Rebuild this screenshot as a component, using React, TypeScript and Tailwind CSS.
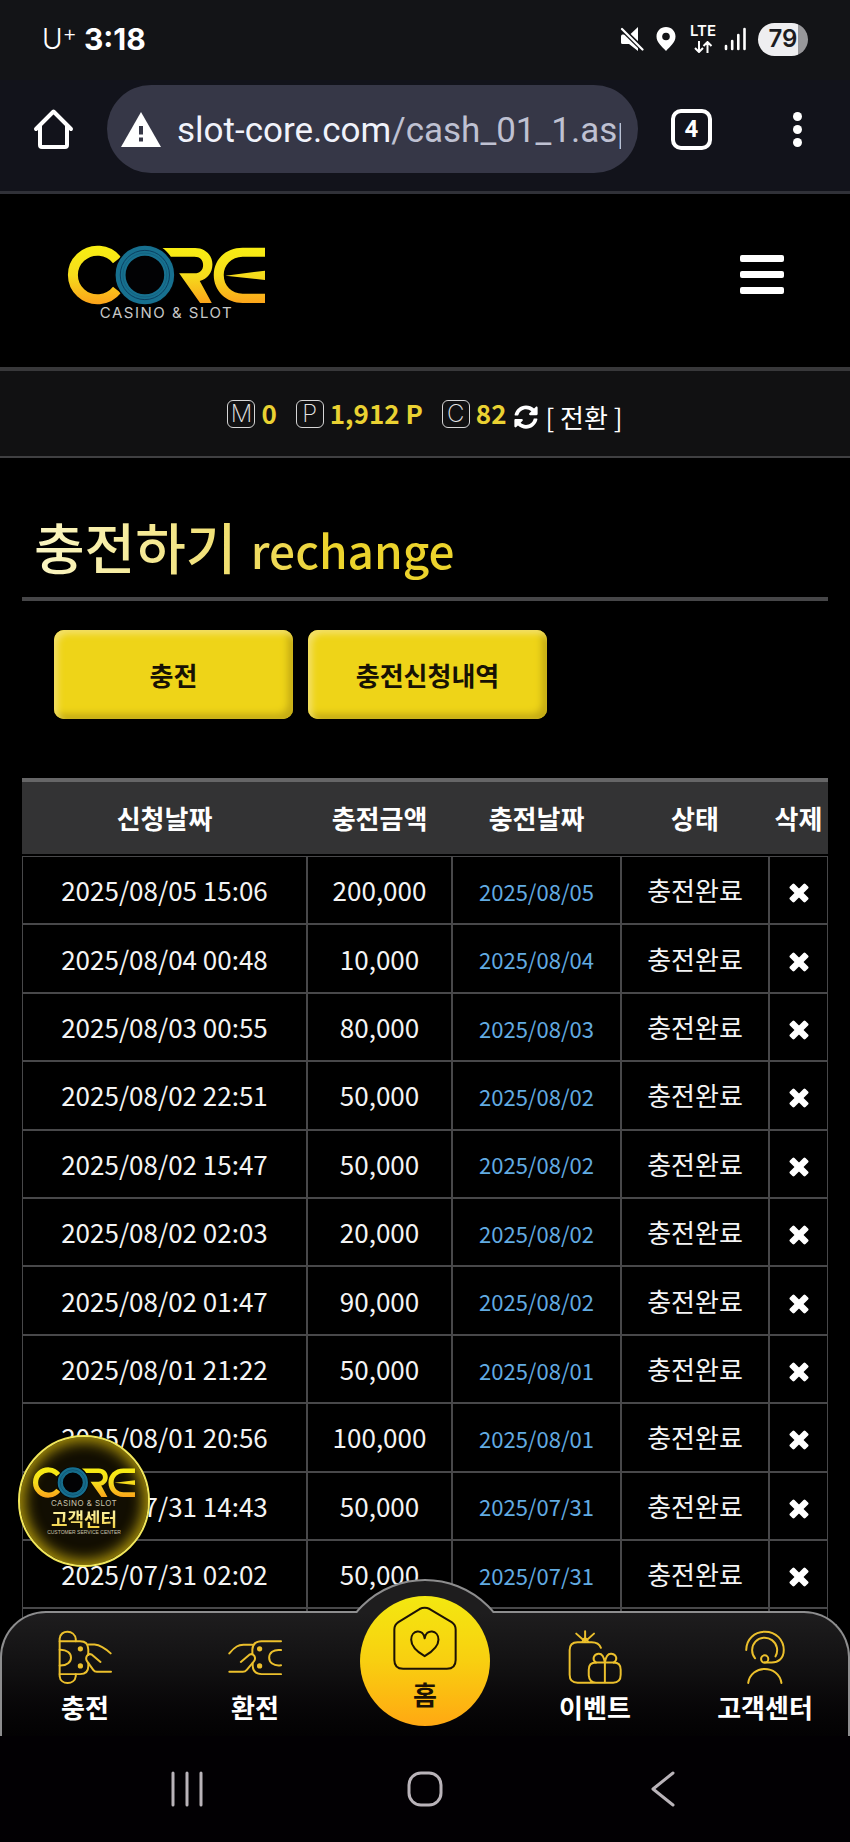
import React from "react";
import { FaSyncAlt } from "react-icons/fa";

type Row = { requested: string; amount: string; charged: string };

const rows: Row[] = [
  { requested: "2025/08/05 15:06", amount: "200,000", charged: "2025/08/05" },
  { requested: "2025/08/04 00:48", amount: "10,000", charged: "2025/08/04" },
  { requested: "2025/08/03 00:55", amount: "80,000", charged: "2025/08/03" },
  { requested: "2025/08/02 22:51", amount: "50,000", charged: "2025/08/02" },
  { requested: "2025/08/02 15:47", amount: "50,000", charged: "2025/08/02" },
  { requested: "2025/08/02 02:03", amount: "20,000", charged: "2025/08/02" },
  { requested: "2025/08/02 01:47", amount: "90,000", charged: "2025/08/02" },
  { requested: "2025/08/01 21:22", amount: "50,000", charged: "2025/08/01" },
  { requested: "2025/08/01 20:56", amount: "100,000", charged: "2025/08/01" },
  { requested: "2025/07/31 14:43", amount: "50,000", charged: "2025/07/31" },
  { requested: "2025/07/31 02:02", amount: "50,000", charged: "2025/07/31" },
];

function CoreMark({ id, className }: { id: string; className: string }) {
  const fill = `url(#${id})`;
  return (
    <svg viewBox="200 168 598 180" className={className} aria-hidden="true">
      <defs>
        <linearGradient id={id} gradientUnits="userSpaceOnUse" x1="0" y1="172" x2="0" y2="345">
          <stop offset="0" stopColor="#f8ee12" />
          <stop offset="0.5" stopColor="#f5dc1c" />
          <stop offset="1" stopColor="#fca31a" />
        </linearGradient>
      </defs>
      <path d="M350 213A74 73 0 1 0 350 303" fill="none" stroke={fill} strokeWidth="30" />
      <circle cx="434" cy="258" r="92" fill="#020204" />
      <circle cx="434" cy="258" r="73" fill="none" stroke="#17708f" strokeWidth="30" />
      <circle cx="434" cy="258" r="74" fill="none" stroke="#0a3f60" strokeWidth="3" />
      <circle cx="434" cy="258" r="66" fill="none" stroke="#125a78" strokeWidth="2" />
      <path
        d="M487 177H585C617 177 637 200 637 226C637 252 622 270 599 276L635 342H600L537 253H583C600 253 609 243 609 228C609 213 600 203 583 203H512C505 193 497 184 487 177Z"
        fill={fill}
      />
      <path
        d="M795 176H728C676 176 641 212 641 258C641 306 678 342 728 342H795V314H728C694 314 671 290 671 258C671 228 694 203 728 203H795Z"
        fill={fill}
      />
      <path d="M676 260L795 245V273Z" fill={fill} />
    </svg>
  );
}

function StatusBar() {
  return (
    <div className="flex h-20 items-center justify-between bg-[#131417] pb-[2px] pr-[42px] pl-[42px] text-white">
      <div className="flex items-center gap-[7px]">
        <span className="flex items-start font-[Inter] text-[28px] leading-8 font-light">
          U<span className="text-[22px] leading-5">+</span>
        </span>
        <span className="font-[Inter] text-[30px] leading-8 font-bold">3:18</span>
      </div>
      <div className="flex items-center">
        <svg viewBox="0 0 24 24" className="mr-3 size-6" fill="#fff" aria-hidden="true">
          <path d="M18 0v16.500L9.500 8ZM5 7.500h1L18 19.500V24L9 17H2.500Q1 17 1 15.500V9.500Q1 7.500 2.500 7.500Z" />
          <path d="M2 2L23 22.500" stroke="#131417" strokeWidth="5" />
          <path d="M2 2L22.500 22.500" stroke="#fff" strokeWidth="2.200" strokeLinecap="round" />
        </svg>
        <svg viewBox="0 0 20 24" className="mr-[14px] h-6 w-5" aria-hidden="true">
          <path d="M10 0C4.500 0 .500 4.200 .500 9.500C.500 15.500 6 19.500 10 24C14 19.500 19.500 15.500 19.500 9.500C19.500 4.200 15.500 0 10 0Z" fill="#fff" />
          <circle cx="10" cy="9.500" r="3.800" fill="#131417" />
        </svg>
        <div className="mr-2 flex flex-col items-center">
          <span className="font-[Inter] text-[15px] leading-3 font-semibold">LTE</span>
          <svg viewBox="0 0 18 12" className="mt-1 h-3 w-5" fill="none" stroke="#fff" strokeWidth="2" aria-hidden="true">
            <path d="M5 0V11M1 7L5 11L9 7M13.500 12V1M9.500 5L13.500 1L17.500 5" />
          </svg>
        </div>
        <svg viewBox="0 0 22 24" className="mr-3 h-6 w-[22px]" stroke="#fff" strokeWidth="2.600" strokeLinecap="round" aria-hidden="true">
          <path d="M2 22V19M8.200 22V14M14.300 22V8M20.500 22V2" />
        </svg>
        <span className="flex h-[33px] w-[50px] items-center justify-center rounded-full bg-linear-to-r from-[#eeeef0] from-79% to-[#97979a] to-79% font-[Inter] text-[24px] leading-8 font-semibold text-[#1b1c20]">
          79
        </span>
      </div>
    </div>
  );
}

function BrowserBar() {
  return (
    <div className="flex h-[114px] items-center border-b-[3px] border-[#303138] bg-[#12131b] pr-11 pb-[13px] pl-[33px]">
      <button type="button" aria-label="Home page" className="shrink-0">
        <svg viewBox="0 0 41 42" className="h-[42px] w-[41px]" fill="none" stroke="#fff" strokeWidth="4" strokeLinejoin="round" strokeLinecap="round" aria-hidden="true">
          <path d="M3 21L20.500 3.500L38 21M7 18V37Q7 39 9 39H32Q34 39 34 37V18" />
        </svg>
      </button>
      <div className="ml-[33px] flex h-[88px] min-w-0 flex-1 items-center rounded-full bg-[#363747] pr-[17px] pl-[14px]">
        <svg viewBox="0 0 40 35" className="h-[35px] w-10 shrink-0" aria-hidden="true">
          <path d="M20 0L40 35H0Z" fill="#fff" />
          <path d="M20 14V22.500M20 25.500V29.500" stroke="#363747" strokeWidth="4" />
        </svg>
        <a
          href="#address"
          className="ml-4 min-w-0 flex-1 overflow-hidden pt-1 font-[Roboto] text-[35px] leading-[52px] whitespace-nowrap text-[#f1f3fb]"
        >
          slot-core.com<span className="text-[#bfc1d2]">/cash_01_1.asp</span>
        </a>
      </div>
      <button
        type="button"
        aria-label="4 open tabs"
        className="ml-[33px] flex size-[41px] shrink-0 items-center justify-center rounded-[10px] border-4 border-white font-[Roboto] text-[24px] leading-8 font-bold text-white"
      >
        4
      </button>
      <button type="button" aria-label="Browser menu" className="ml-[77px] flex w-[17px] shrink-0 flex-col items-center gap-1">
        <span className="size-[9px] rounded-full bg-white" />
        <span className="size-[9px] rounded-full bg-white" />
        <span className="size-[9px] rounded-full bg-white" />
      </button>
    </div>
  );
}

function PointItem({ letter, value }: { letter: string; value: string }) {
  return (
    <span className="flex items-center gap-[6px]">
      <span className="flex size-7 items-center justify-center rounded-md border border-[#d6d6d6] font-[Inter] text-[24px] leading-6 font-extralight text-[#e4e4e4]">
        {letter}
      </span>
      <span className="pb-[2px] text-[26px] leading-8 font-bold text-[#ead232]">{value}</span>
    </span>
  );
}

function DeleteIcon() {
  return (
    <svg viewBox="0 0 20 20" className="block size-5" fill="#fff" aria-hidden="true">
      <rect x="-1" y="6.800" width="22" height="6.400" rx="1.400" transform="rotate(45 10 10)" />
      <rect x="-1" y="6.800" width="22" height="6.400" rx="1.400" transform="rotate(-45 10 10)" />
    </svg>
  );
}

const cell = "h-[68px] border border-[#48484a] p-0 text-center align-middle";

function HistoryTable() {
  return (
    <table className="mt-[59px] h-[899px] w-full table-fixed border-separate border-spacing-0 text-[26px] leading-8 text-[#f4f4f4]">
      <colgroup>
        <col className="w-[285px]" />
        <col className="w-[145px]" />
        <col className="w-[169px]" />
        <col className="w-[148px]" />
        <col className="w-[59px]" />
      </colgroup>
      <thead>
        <tr>
          {["신청날짜", "충전금액", "충전날짜", "상태", "삭제"].map((h) => (
            <th
              key={h}
              scope="col"
              className="h-[78px] border-t-4 border-b-2 border-t-[#666667] border-b-black bg-[#333334] p-0 text-center font-bold whitespace-nowrap text-white"
            >
              {h}
            </th>
          ))}
        </tr>
      </thead>
      <tbody>
        {rows.map((r) => (
          <tr key={r.requested}>
            <td className={cell}>{r.requested}</td>
            <td className={cell}>{r.amount}</td>
            <td className={cell}>
              <span className="text-[22px] text-[#62abe2]">{r.charged}</span>
            </td>
            <td className={cell}>충전완료</td>
            <td className={cell}>
              <button type="button" aria-label="삭제" className="mx-auto block pt-[6px]">
                <DeleteIcon />
              </button>
            </td>
          </tr>
        ))}
        <tr aria-hidden="true">
          <td className={cell} />
          <td className={cell} />
          <td className={cell} />
          <td className={cell} />
          <td className={cell} />
        </tr>
      </tbody>
    </table>
  );
}

function NavItem({ label, children }: { label: string; children: React.ReactNode }) {
  return (
    <a href="#menu" className="flex flex-1 flex-col items-center gap-[7px] pt-[17px] text-[26px] leading-8 font-bold text-white">
      {children}
      <span>{label}</span>
    </a>
  );
}

const iconClass = "size-[54px] fill-none stroke-[#ecc02c] [stroke-linecap:round] [stroke-linejoin:round] [stroke-width:6px]";

function BottomNav() {
  return (
    <nav className="absolute inset-x-0 bottom-0">
      <div className="absolute inset-x-0 -top-8 z-10 flex h-[34px] justify-center overflow-hidden">
        <span className="size-[180px] shrink-0 rounded-full border-2 border-[#8d8d8e] bg-[#1e1d1e]" />
      </div>
      <div className="h-[125px] rounded-t-[46px] border-x-2 border-t-2 border-[#8d8d8e] bg-linear-to-b from-[#1e1d1e] via-[#100f10] to-[#030203]">
        <div className="-mx-0.5 flex h-full">
          <NavItem label="충전">
            <svg viewBox="173 656 164 164" className={iconClass} aria-hidden="true">
              <path d="M178 690V790M178 690V682C180 654 224 654 227 684V690M178 790V796C180 824 224 824 227 796V790" />
              <path d="M178 690H240Q265 690 265 715V732M265 756V766Q265 790 240 790H178M178 716C224 714 224 766 178 764" />
              <path d="M265 700H284C304 702 320 715 333 727M302 753L276 731C262 724 254 742 262 752L280 777Q284 783 291 783H334" />
              <circle cx="241" cy="713" r="5" className="fill-[#ecc02c]" />
              <circle cx="241" cy="765" r="5" className="fill-[#ecc02c]" />
            </svg>
          </NavItem>
          <NavItem label="환전">
            <svg viewBox="683 656 164 164" className={iconClass} aria-hidden="true">
              <path d="M844 690H785Q759 690 757 715V730M758 756V766Q760 790 785 790H844M844 717C796 710 796 770 844 763" />
              <path d="M687 727C705 705 715 702 730 701H757M722 753L748 731C762 724 770 742 761 752L740 777Q735 783 728 783H687" />
              <circle cx="779" cy="713" r="5" className="fill-[#ecc02c]" />
              <circle cx="779" cy="765" r="5" className="fill-[#ecc02c]" />
            </svg>
          </NavItem>
          <div className="relative z-20 flex flex-1 justify-center">
            <a
              href="#home"
              className="-mt-[17px] flex size-[130px] shrink-0 flex-col items-center gap-2 rounded-full bg-linear-to-b from-[#f3e810] via-[#f8cf10] to-[#ffa812] pt-[10px] text-[26px] leading-8 font-bold text-[#1c1205]"
            >
              <svg viewBox="581 140 190 190" className="size-16 shrink-0 fill-none stroke-[#1c1205] [stroke-linejoin:round] [stroke-width:6px]" aria-hidden="true">
                <path d="M660 149Q675 142 690 149L755 188Q767 196 767 210V300Q767 326 741 326H611Q585 326 585 300V210Q585 196 597 188Z" />
                <path d="M675 289C650 274 635 257 635 240C635 210 671 206 675 236C679 206 716 210 716 240C716 257 700 274 675 289Z" />
              </svg>
              <span>홈</span>
            </a>
          </div>
          <NavItem label="이벤트">
            <svg viewBox="143 207 164 164" className={iconClass} aria-hidden="true">
              <path d="M243 261C238 248 228 244 215 244H172Q148 244 148 268V343Q148 367 172 367H280Q303 367 303 343V328Q303 306 282 306H228Q206 306 206 328V345Q208 367 228 367" />
              <path d="M255 306C252 286 243 278 235 279C219 282 216 298 228 306M255 306C258 286 267 278 275 279C292 282 294 298 282 306M255 306V366" />
              <path d="M195 242V211M195 242L168 218M195 242L222 218M187 242L195 230L204 242" />
            </svg>
          </NavItem>
          <NavItem label="고객센터">
            <svg viewBox="654 207 164 164" className={iconClass} aria-hidden="true">
              <path d="M679 268C679 234 705 212 736 212C770 212 793 238 793 268C793 294 776 306 756 306H735" />
              <path d="M706 293A38 38 0 1 1 768 287M685 368C693 311 777 311 786 368" />
              <circle cx="735" cy="295" r="11" />
            </svg>
          </NavItem>
        </div>
      </div>
    </nav>
  );
}

function SupportBadge() {
  return (
    <a
      href="#support"
      className="absolute bottom-[169px] left-[18px] flex size-[132px] flex-col items-center rounded-full border-2 border-[#f2e75a] bg-[#120e02] pt-[30px] shadow-[inset_0_0_14px_5px_#a8900a]"
    >
      <CoreMark id="badgeGold" className="h-[31px] w-[104px]" />
      <span className="font-[Inter] text-[8px] leading-[10px] tracking-wider text-[#c9c4ad]">CASINO &amp; SLOT</span>
      <span className="bg-linear-to-b from-[#fdf7b0] to-[#f2d23e] bg-clip-text text-[18px] leading-5 font-bold text-transparent">고객센터</span>
      <span className="font-['Liberation_Sans'] text-[5px] leading-[8px] text-[#c9c4ad]">CUSTOMER SERVICE CENTER</span>
    </a>
  );
}

export default function App() {
  return (
    <div className="flex h-screen flex-col bg-black font-['Noto_Sans_CJK_KR','Noto_Sans',sans-serif]">
      <StatusBar />
      <BrowserBar />
      <div className="relative min-h-0 flex-1">
        <div className="h-full overflow-x-hidden overflow-y-auto [scrollbar-width:none]">
          <header className="flex h-[173px] items-center justify-between pr-[66px] pl-[67px]">
            <a href="#top" aria-label="CORE CASINO & SLOT" className="flex flex-col items-center pt-[5px]">
              <CoreMark id="headerGold" className="h-[60px] w-[199px]" />
              <span className="font-[Inter] text-[15px] leading-4 tracking-widest text-[#c8c8c8]">CASINO &amp; SLOT</span>
            </a>
            <button type="button" aria-label="메뉴" className="flex w-11 flex-col gap-[9px] pb-3">
              <span className="h-[7px] rounded-xs bg-white" />
              <span className="h-[7px] rounded-xs bg-white" />
              <span className="h-[7px] rounded-xs bg-white" />
            </button>
          </header>
          <div className="flex h-[91px] items-center justify-center gap-[19px] border-t-4 border-b-2 border-t-[#38383a] border-b-[#404042] bg-[#111112]">
            <PointItem letter="M" value="0" />
            <PointItem letter="P" value="1,912 P" />
            <span className="flex items-center gap-[7px]">
              <PointItem letter="C" value="82" />
              <button type="button" className="flex items-center gap-[8px] pt-[6px] text-[26px] leading-8 text-white">
                <FaSyncAlt className="size-6" aria-hidden="true" />
                [ 전환 ]
              </button>
            </span>
          </div>
          <main className="px-[22px]">
            <h1 className="flex h-[143px] items-end border-b-4 border-[#464648] pl-3">
              <span className="bg-linear-to-r from-[#fbf6c4] to-[#ecd32c] to-70% bg-clip-text pb-3 text-[55px] leading-[72px] font-medium text-transparent">
                충전하기 <span className="ml-0.5 text-[46px]">rechange</span>
              </span>
            </h1>
            <div className="mt-[29px] flex gap-[15px] pl-8">
              <button
                type="button"
                className="h-[89px] w-[239px] rounded-[10px] bg-[#eed418] text-[26px] leading-8 font-bold text-[#171204] shadow-[inset_4px_4px_6px_#f3e069,inset_-5px_-5px_7px_#c4ab14]"
              >
                충전
              </button>
              <button
                type="button"
                className="h-[89px] w-[239px] rounded-[10px] bg-[#eed418] text-[26px] leading-8 font-bold text-[#171204] shadow-[inset_4px_4px_6px_#f3e069,inset_-5px_-5px_7px_#c4ab14]"
              >
                충전신청내역
              </button>
            </div>
            <HistoryTable />
          </main>
        </div>
        <BottomNav />
        <SupportBadge />
      </div>
      <div className="grid h-[106px] shrink-0 grid-cols-3 items-center justify-items-center bg-[#020003] px-[68px]">
        <button type="button" aria-label="Recent apps">
          <svg viewBox="0 0 34 36" className="h-9 w-[34px]" stroke="#b9b3b9" strokeWidth="3" strokeLinecap="round" aria-hidden="true">
            <path d="M3 2V34M17 2V34M31 2V34" />
          </svg>
        </button>
        <button type="button" aria-label="Home">
          <svg viewBox="0 0 36 36" className="size-9" fill="none" stroke="#b9b3b9" strokeWidth="3" aria-hidden="true">
            <rect x="2" y="2" width="32" height="32" rx="12" />
          </svg>
        </button>
        <button type="button" aria-label="Back">
          <svg viewBox="0 0 24 36" className="h-9 w-6" fill="none" stroke="#b9b3b9" strokeWidth="3" strokeLinecap="round" strokeLinejoin="round" aria-hidden="true">
            <path d="M22 2L2 18L22 34" />
          </svg>
        </button>
      </div>
    </div>
  );
}
